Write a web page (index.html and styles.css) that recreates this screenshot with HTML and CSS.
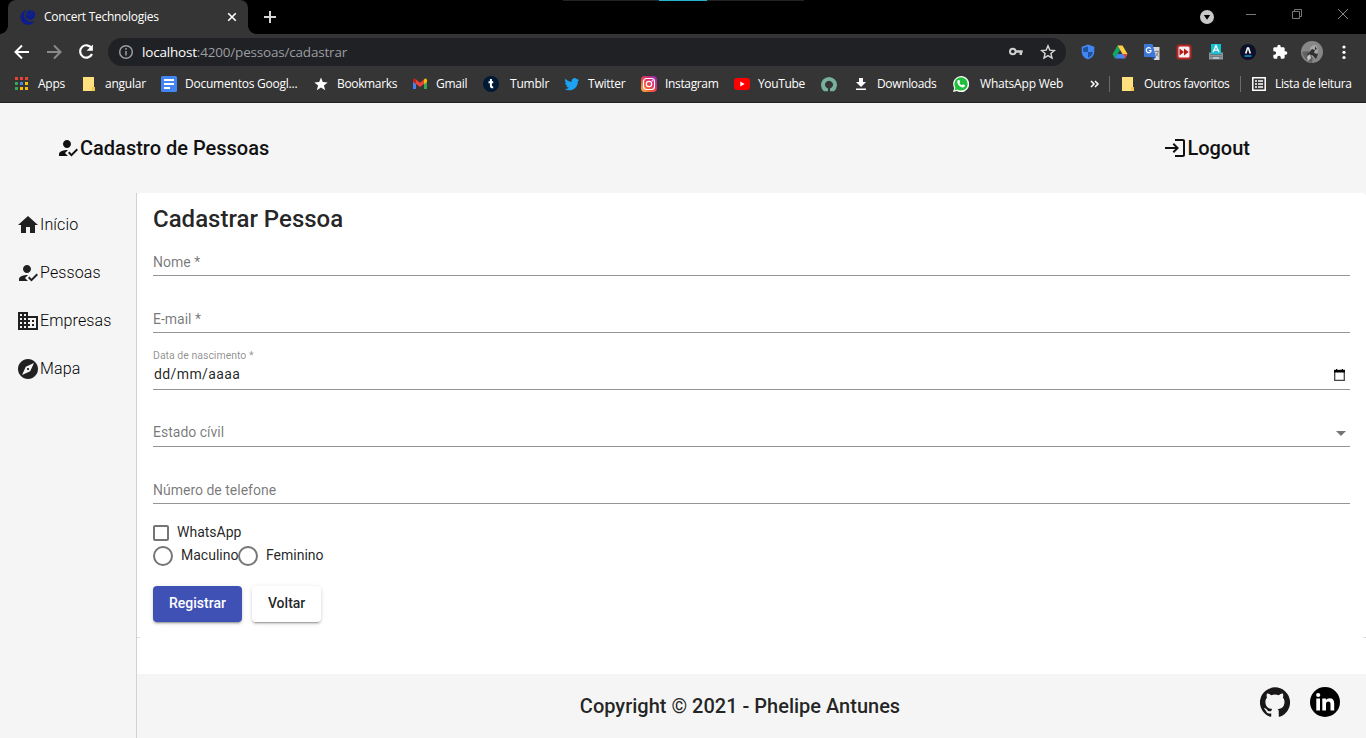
FILE: index.html
```
<!DOCTYPE html>
<html lang="pt-BR">
<head>
<meta charset="utf-8">
<title>Concert Technologies</title>
<link rel="stylesheet" href="styles.css">
</head>
<body>
<div class="browser">
  <div class="tabstrip">
    <div class="loadbar"><span class="loadbar-fill"></span></div>
    <div class="tab">
      <svg class="favicon" width="16" height="16" viewBox="0 0 16 16"><path d="M6.500 1A7.500 7.500 0 1 0 14.500 12C11 13.500 7 12.500 5 9.500C3.500 7 4 3.500 6.500 1Z" fill="#0d1d8c"/><path d="M6.500 3.500C9-.2 14.500 .8 15.300 5C15.800 9 11.500 12 8 10.300C5.500 9 5 6 6.500 3.500Z" fill="#0d1d8c"/><path d="M6.300 4.500L8.500 6.500 12.500 3" fill="none" stroke="#353535" stroke-width=".6"/></svg>
      <span class="tab-title">Concert Technologies</span>
      <svg class="tab-close" width="10" height="10" viewBox="0 0 10 10"><path d="M1.200 1.200l7.600 7.600M8.800 1.200L1.200 8.800" stroke="#fff" stroke-width="1.600"/></svg>
    </div>
    <svg class="newtab" width="12" height="12" viewBox="0 0 12 12"><path d="M6 0v12M0 6h12" stroke="#d5d5d5" stroke-width="2"/></svg>
    <div class="window-buttons">
      <svg width="14" height="14" viewBox="0 0 14 14"><circle cx="7" cy="7" r="7" fill="#c8c8c8"/><path d="M3.800 5h6.400L7 9.800z" fill="#000"/></svg>
      <svg width="10" height="10" viewBox="0 0 10 10"><path d="M0 5.500h10" stroke="#777"/></svg>
      <svg width="10" height="10" viewBox="0 0 10 10" fill="none" stroke="#777"><path d="M.5 2.500h7v7h-7zM2.500 2.500v-2h7v7h-2"/></svg>
      <svg width="10" height="10" viewBox="0 0 10 10"><path d="M0 0l10 10M10 0L0 10" stroke="#888"/></svg>
    </div>
  </div>
  <div class="toolbar">
    <svg width="24" height="24" viewBox="0 0 24 24" fill="none" stroke="#fff" stroke-width="2"><path d="M19 12H6M12 5.500L5.500 12l6.500 6.500"/></svg>
    <svg width="24" height="24" viewBox="0 0 24 24" fill="none" stroke="#8a8a8a" stroke-width="2"><path d="M5 12h13M12 5.500l6.500 6.500-6.500 6.500"/></svg>
    <svg width="24" height="24" viewBox="0 0 24 24" fill="none" stroke="#fff" stroke-width="2.200"><path d="M17.500 8A6.200 6.200 0 1 0 18 14"/><path d="M18.900 4.500v6.300h-6.300z" fill="#fff" stroke="none"/></svg>
    <div class="omnibox">
      <svg width="16" height="16" viewBox="0 0 16 16" fill="none" stroke="#9a9da1" stroke-width="1.500"><circle cx="8" cy="8" r="6.300"/><path d="M8 7v4.500M8 4v1.700"/></svg>
      <span class="url"><b>localhost</b>:4200/pessoas/cadastrar</span>
      <svg width="16" height="16" viewBox="0 0 16 16" fill="none" stroke="#d0d0d0"><circle cx="4.800" cy="7.500" r="2.800" stroke-width="2"/><path d="M7.500 7.500h7.200M12.800 7.500v3.500" stroke-width="2.400"/></svg>
      <svg width="16" height="16" viewBox="0 0 16 16" fill="none" stroke="#d8d8d8" stroke-width="1.400"><path d="M8 1.800l1.800 4.300 4.600.4-3.500 3 1.100 4.500L8 11.600 4 14l1.100-4.500-3.500-3 4.600-.4z"/></svg>
    </div>
    <div class="extensions">
      <svg width="16" height="16" viewBox="0 0 16 16"><path d="M8 .5l6.300 2.300v5c0 3.700-2.600 6.300-6.300 7.700C4.300 14.100 1.700 11.500 1.700 7.800v-5z" fill="#4285f4"/><path d="M8 2.500V8H3.200V3.900zM8 8h4.800c-.2 2.900-2.200 4.700-4.800 5.700z" fill="#21529c"/></svg>
      <svg width="16" height="16" viewBox="0 0 16 16"><path d="M5.500 1.500L.5 10.300 3 14.500 8 6z" fill="#11a861"/><path d="M5.500 1.500h5L15.500 10h-5z" fill="#ffcf48"/><path d="M5.600 10H15.500L13 14.500H3z" fill="#4285f4"/><path d="M11 10h4.500L13 14.500z" fill="#ea4335"/></svg>
      <svg width="16" height="16" viewBox="0 0 16 16"><path d="M6 3h9.500v13H10z" fill="#d8d8d8"/><path d="M0 0h8.500l3.500 13H1q-1 0-1-1z" fill="#3c78d8"/><path d="M7 13h5l-3 3z" fill="#254f9e"/><path d="M6.800 4.700A2.500 2.500 0 1 0 7 7.300V6.500H4.800" fill="none" stroke="#fff" stroke-width="1.200"/><path d="M10.800 7.500H15M13 6.500v1M14.200 8q-.5 3-2.500 4M11.600 9l3 3.500" stroke="#777" stroke-width=".8" fill="none"/></svg>
      <svg width="16" height="16" viewBox="0 0 16 16"><rect x=".5" y=".5" width="15" height="15" rx="3" fill="#b92525"/><rect x="2.500" y="2.500" width="11" height="11" rx="1.500" fill="#f7efef"/><path d="M3.500 4.500L8 8l-4.500 3.500zM8 4.500L12.700 8 8 11.500z" fill="#b71919"/></svg>
      <svg width="16" height="16" viewBox="0 0 16 16"><rect x="1" y="8.500" width="14" height="7" fill="#8a9498"/><path d="M2.500 10.500h11M2.500 12.500h11" stroke="#555f64" stroke-dasharray="1 1"/><path d="M3 0h10v10H3z" fill="#16bfd2"/><path d="M5 8.300L8 1.500l3 6.800M6.200 6.200h3.600" fill="none" stroke="#fff" stroke-width="1.300"/><path d="M5 14h6" stroke="#eee"/></svg>
      <svg width="16" height="16" viewBox="0 0 16 16"><circle cx="8" cy="8" r="8" fill="#0c1029"/><path d="M5.700 9.500L7.500 4h1l1.800 5.500" fill="none" stroke="#fff" stroke-width="1.600"/><path d="M4.500 12h7" stroke="#168fd1" stroke-width="1.500"/></svg>
      <svg width="16" height="16" viewBox="0 0 24 24"><path d="M20.500 11H19V7c0-1.100-.9-2-2-2h-4V3.500a2.500 2.500 0 0 0-5 0V5H4c-1.100 0-2 .9-2 2v3.800h1.500a2.700 2.700 0 0 1 0 5.400H2V20c0 1.100.9 2 2 2h3.800v-1.500a2.700 2.700 0 0 1 5.400 0V22H17c1.100 0 2-.9 2-2v-4h1.500a2.500 2.500 0 0 0 0-5z" fill="#fff"/></svg>
    </div>
    <svg class="avatar" width="22" height="22" viewBox="0 0 22 22"><circle cx="11" cy="11" r="11" fill="#878787"/><path d="M1 11q2 8 10 11l1-7-5-5z" fill="#606060"/><path d="M9 7q4-5 7-2l1 5-3 7-3-1z" fill="#a8a8a8"/><path d="M6 14l5-6 3 1-1 3 4 1-2 5-4-4zM14 5l2 3-2 1" fill="#303030"/><path d="M6 16l3-3 1 4-3 3z" fill="#c6c6c6"/></svg>
    <svg class="menu-dots" width="4" height="16" viewBox="0 0 4 16" fill="#fff"><circle cx="2" cy="3" r="1.600"/><circle cx="2" cy="8.300" r="1.600"/><circle cx="2" cy="13.500" r="1.600"/></svg>
  </div>
  <div class="bookmarks">
    <span class="bm"><svg width="16" height="16" viewBox="0 0 16 16"><path d="M1 1h3v3H1zM6 1h3v3H6zM11 1h3v3h-3z" fill="#ea4335"/><path d="M1 6h3v3H1zM1 11h3v3H1z" fill="#34a853"/><path d="M6 6h3v3H6z" fill="#4285f4"/><path d="M11 6h3v3h-3zM6 11h3v3H6zM11 11h3v3h-3z" fill="#fbbc05"/></svg>Apps</span>
    <span class="bm"><svg width="16" height="16" viewBox="0 0 16 16"><path d="M2 1h11v10h1v4H2z" fill="#ffe07f"/><path d="M11 11h3v4h-3z" fill="#f2c94c"/></svg>angular</span>
    <span class="bm"><svg width="16" height="16" viewBox="0 0 16 16"><rect width="16" height="16" rx="1.500" fill="#4285f4"/><path d="M3 4h10M3 8h10M3 12h6" stroke="#fff" stroke-width="2"/></svg>Documentos Googl...</span>
    <span class="bm snug"><svg width="16" height="16" viewBox="0 0 16 16"><path d="M8 1.500l1.800 4.600 4.900.3-3.800 3.100 1.300 4.800L8 11.600l-4.200 2.700 1.300-4.800-3.800-3.100 4.900-.3z" fill="#fff"/></svg>Bookmarks</span>
    <span class="bm"><svg width="16" height="16" viewBox="0 0 16 16"><path d="M1 4v9h3V7z" fill="#4285f4"/><path d="M12 7v6h3V4z" fill="#34a853"/><path d="M4 3.500l4 3.300 4-3.300V8l-4 3-4-3z" fill="#ea4335"/><path d="M1 4q1-2.500 3-.5V8L1 6z" fill="#c5221f"/><path d="M15 4q-1-2.500-3-.5V8l3-2z" fill="#fbbc04"/></svg>Gmail</span>
    <span class="bm wide"><svg width="16" height="16" viewBox="0 0 16 16"><circle cx="8" cy="8" r="8" fill="#001935"/><path d="M7.900 3v7q0 1.500 2.300 1.300M5.500 6.200h4.700" fill="none" stroke="#fff" stroke-width="2"/></svg>Tumblr</span>
    <span class="bm"><svg width="16" height="16" viewBox="-1 0 26 24"><path d="M23.600 4.900c-.9.400-1.800.7-2.800.8 1-.6 1.800-1.600 2.200-2.700-1 .6-2 1-3.100 1.200a4.900 4.900 0 0 0-8.400 4.500C7.500 8.500 3.900 6.600 1.400 3.600a4.900 4.900 0 0 0 1.500 6.600c-.8 0-1.600-.2-2.200-.6v.1c0 2.400 1.700 4.400 3.900 4.800-.7.200-1.500.2-2.200.1.600 2 2.400 3.400 4.600 3.400A9.900 9.900 0 0 1 0 20a13.900 13.900 0 0 0 7.500 2.200c9.100 0 14-7.500 14-14v-.6c.8-.7 1.500-1.600 2.100-2.700z" fill="#1da1f2"/></svg>Twitter</span>
    <span class="bm snug"><svg width="16" height="16" viewBox="0 0 16 16"><defs><linearGradient id="ig" x1="0" y1="1" x2="1" y2="0"><stop stop-color="#fdc447"/><stop offset=".35" stop-color="#f0583a"/><stop offset=".65" stop-color="#d62976"/><stop offset="1" stop-color="#8134c0"/></linearGradient></defs><rect width="16" height="16" rx="4" fill="url(#ig)"/><g fill="none" stroke="#fff" stroke-width="1.200"><rect x="2.500" y="2.500" width="11" height="11" rx="3"/><circle cx="8" cy="8" r="2.700"/></g><circle cx="11.300" cy="4.700" r=".7" fill="#fff"/></svg>Instagram</span>
    <span class="bm snug"><svg width="16" height="16" viewBox="0 0 16 16"><rect y="2" width="16" height="12" rx="3" fill="#f00"/><path d="M6.300 5.500v5l4.300-2.500z" fill="#fff"/></svg>YouTube</span>
    <span class="bm"><svg width="16" height="16" viewBox="0 0 16 16"><path d="M3 15.200H7V12.600A4 4 0 1 1 9 12.600V15.200H13A8 8 0 1 0 3 15.200Z" fill="#78b09f"/></svg></span>
    <span class="bm snug"><svg width="16" height="16" viewBox="0 0 16 16"><path d="M6 2h4v4h3l-5 5-5-5h3zM3 12.500h10V14H3z" fill="#fff"/></svg>Downloads</span>
    <span class="bm wide"><svg width="16" height="16" viewBox="0 0 16 16"><path d="M0 16l1.200-4A8 8 0 1 1 4 14.900z" fill="#fff"/><circle cx="8" cy="7.900" r="6.700" fill="#20bf3d"/><path d="M1.500 14.500l1-3 2 2z" fill="#20bf3d"/><path d="M5 4h1.400l.8 2-.8 1q1 1.700 2.600 2.300l1-1.100 2 1q-.3 2.500-2.600 2.200Q5.500 10.500 4.300 6.600 4 5 5 4z" fill="#fff"/></svg>WhatsApp Web</span>
    <span class="bm"><svg width="16" height="16" viewBox="0 0 16 16"><path d="M3 5l3 3-3 3M7 5l3 3-3 3" fill="none" stroke="#fff" stroke-width="1.500"/></svg></span>
    <span class="bm divider snug"><svg width="16" height="16" viewBox="0 0 16 16"><path d="M2 1h11v10h1v4H2z" fill="#ffe07f"/><path d="M11 11h3v4h-3z" fill="#f2c94c"/></svg>Outros favoritos</span>
    <span class="bm divider snug"><svg width="16" height="16" viewBox="0 0 16 16"><path d="M1.800 1.800h12.400v12.400H1.800z" fill="none" stroke="#fff" stroke-width="1.500"/><path d="M4 5h2M7 5h5M4 8h2M7 8h5M4 11h2M7 11h5" stroke="#fff" stroke-width="1.500"/></svg>Lista de leitura</span>
  </div>
</div>

<header class="app-header">
  <div class="brand"><svg width="24" height="24" viewBox="0 0 24 24"><path d="M9 17l3-2.940c-.39-.04-.68-.06-1-.06-2.670 0-8 1.340-8 4v2h9zM11 12c2.210 0 4-1.790 4-4s-1.790-4-4-4-4 1.790-4 4 1.790 4 4 4M15.470 20.500L12 17l1.400-1.410 2.070 2.080 5.130-5.170 1.400 1.410z"/></svg>Cadastro de Pessoas</div>
  <div class="logout"><svg width="24" height="24" viewBox="0 0 24 24"><path d="M11 7L9.600 8.400l2.600 2.600H2v2h10.200l-2.600 2.600L11 17l5-5zM20 19h-8v2h8c1.100 0 2-.9 2-2V5c0-1.100-.9-2-2-2h-8v2h8z"/></svg>Logout</div>
</header>

<div class="app-body">
  <nav class="sidebar">
    <a class="nav-item"><svg width="24" height="24" viewBox="0 0 24 24"><path d="M10 20v-6h4v6h5v-8h3L12 3 2 12h3v8z"/></svg><span>Início</span></a>
    <a class="nav-item"><svg width="24" height="24" viewBox="0 0 24 24"><path d="M9 17l3-2.940c-.39-.04-.68-.06-1-.06-2.670 0-8 1.340-8 4v2h9zM11 12c2.210 0 4-1.790 4-4s-1.790-4-4-4-4 1.790-4 4 1.790 4 4 4M15.470 20.500L12 17l1.400-1.410 2.070 2.080 5.130-5.170 1.400 1.410z"/></svg><span>Pessoas</span></a>
    <a class="nav-item"><svg width="24" height="24" viewBox="0 0 24 24"><path d="M12 7V3H2v18h20V7H12zM6 19H4v-2h2v2zm0-4H4v-2h2v2zm0-4H4V9h2v2zm0-4H4V5h2v2zm4 12H8v-2h2v2zm0-4H8v-2h2v2zm0-4H8V9h2v2zm0-4H8V5h2v2zm10 12h-8v-2h2v-2h-2v-2h2v-2h-2V9h8v10zm-2-8h-2v2h2v-2zm0 4h-2v2h2v-2z"/></svg><span>Empresas</span></a>
    <a class="nav-item"><svg width="24" height="24" viewBox="0 0 24 24"><path d="M12 10.900c-.61 0-1.100.49-1.100 1.100s.49 1.100 1.100 1.100c.61 0 1.100-.49 1.100-1.100s-.49-1.100-1.100-1.100zM12 2C6.480 2 2 6.480 2 12s4.480 10 10 10 10-4.480 10-10S17.520 2 12 2zm2.190 12.190L6 18l3.810-8.190L18 6l-3.810 8.190z"/></svg><span>Mapa</span></a>
  </nav>
  <div class="content">
    <main class="card">
      <h1 class="card-title">Cadastrar Pessoa</h1>
      <div class="field first"><span class="label">Nome *</span></div>
      <div class="field"><span class="label">E-mail *</span></div>
      <div class="field date">
        <div class="stack"><span class="float-label">Data de nascimento *</span><span class="value">dd/mm/aaaa</span></div>
        <svg class="calendar" width="11" height="12" viewBox="0 0 11 12"><path d="M.7 1.500h9.600v9.800H.7z" fill="none" stroke="#444" stroke-width="1.300"/><path d="M0 1h11v2.500H0zM2 0h1.200v1H2zM7.800 0H9v1H7.800z"/></svg>
      </div>
      <div class="field"><span class="label raised">Estado cívil</span><svg class="caret" width="10" height="5" viewBox="0 0 10 5"><path d="M0 0h10L5 5z" fill="#757575"/></svg></div>
      <div class="field"><span class="label">Número de telefone</span></div>
      <div class="check-row"><span class="checkbox"></span><span class="option-text">WhatsApp</span></div>
      <div class="radio-row"><span class="option first-option"><span class="radio"></span><span class="option-text">Maculino</span></span><span class="option"><span class="radio"></span><span class="option-text">Feminino</span></span></div>
      <div class="actions"><button class="btn primary">Registrar</button><button class="btn">Voltar</button></div>
    </main>
    <footer class="footer">
      <div class="copyright">Copyright © 2021 - Phelipe Antunes</div>
      <div class="social">
        <svg width="30" height="30" viewBox="0 0 24 24"><path fill="#191717" d="M12 .3a12 12 0 0 0-3.800 23.400c.6.100.8-.3.800-.6v-2c-3.300.7-4-1.600-4-1.600-.6-1.400-1.400-1.800-1.400-1.800-1-.7.1-.7.1-.7 1.200 0 1.900 1.200 1.900 1.200 1 1.800 2.800 1.300 3.500 1 0-.8.400-1.300.7-1.600-2.700-.3-5.500-1.300-5.500-6 0-1.200.5-2.300 1.300-3.100-.2-.4-.6-1.600 0-3.200 0 0 1-.3 3.400 1.200a11.500 11.500 0 0 1 6 0c2.300-1.500 3.300-1.200 3.300-1.200.6 1.600.2 2.800 0 3.200.9.800 1.300 1.900 1.300 3.200 0 4.600-2.800 5.600-5.500 5.900.5.400.9 1 .9 2.200v3.300c0 .3.100.7.800.6A12 12 0 0 0 12 .3"/></svg>
        <svg width="30" height="30" viewBox="0 0 30 30"><circle cx="15" cy="15" r="15"/><path fill="#fff" d="M6.300 11.500h3.700v12H6.300zM12.300 11.500h3.600v1.600q1.200-1.900 3.700-1.900 4.600 0 4.600 5.300v7h-3.700v-6.300q0-2.800-2.200-2.800-2.300 0-2.300 2.800v6.300h-3.700z"/><circle cx="8.200" cy="8" r="2.100" fill="#fff"/></svg>
      </div>
    </footer>
  </div>
</div>
</body>
</html>
```
FILE: styles.css
```
* { box-sizing: border-box; }
body { margin: 0; width: 1366px; height: 738px; overflow: hidden; background: #fff; font-family: Roboto, sans-serif; color: rgba(0, 0, 0, .87); }
svg { display: block; flex: none; }

/* browser window */
.browser { height: 103px; background: #353535; border-bottom: 1px solid #202124; font: 12px/16px "Open Sans", sans-serif; color: #fff; }
.tabstrip { position: relative; height: 34px; background: #000; display: flex; align-items: center; padding-left: 8px; }
.loadbar { position: absolute; top: 0; left: 563px; width: 241px; height: 1px; background: #222; }
.loadbar-fill { display: block; width: 48px; height: 1px; margin-left: 96px; background: #22b4cf; }
.tab { position: relative; width: 240px; height: 34px; background: #353535; border-radius: 8px 8px 0 0; display: flex; align-items: center; padding: 0 11px 0 12px; }
.tab::before, .tab::after { content: ""; position: absolute; bottom: 0; width: 8px; height: 8px; }
.tab::before { left: -8px; background: radial-gradient(circle at 0 0, #000 7.5px, #353535 8px); }
.tab::after { right: -8px; background: radial-gradient(circle at 100% 0, #000 7.5px, #353535 8px); }
.tab-title { margin-left: 8px; flex: 1; letter-spacing: -.28px; white-space: nowrap; }
.newtab { margin-left: 16px; }
.window-buttons { margin-left: auto; display: flex; align-items: center; gap: 36px; padding: 0 18px 6px 0; }
.window-buttons svg:first-child { margin: 6px -4px 0 0; }
.toolbar { height: 36px; display: flex; align-items: center; padding-left: 10px; }
.toolbar > svg + svg { margin-left: 8px; }
.omnibox { margin-left: 10px; width: 958px; height: 28px; border-radius: 14px; background: #202124; display: flex; align-items: center; padding: 0 10px; }
.url { flex: 1; margin-left: 8px; font-size: 13.5px; line-height: 20px; letter-spacing: -.19px; color: #9a9da1; }
.url b { font-weight: 400; color: #fff; }
.omnibox svg:last-child { margin-left: 16px; }
.extensions { display: flex; gap: 16px; margin-left: 14px; }
.avatar { margin-left: 13px; }
.toolbar > svg.menu-dots { margin-left: 19px; }
.bookmarks { height: 28px; display: grid; align-items: center; padding-left: 14px; grid-template-columns: 67px 80px 152px 99px 71px 81px 77px 93px 87px 32px 100px 135px 21px 131px 126px; }
.bm { display: flex; align-items: center; gap: 8px; white-space: nowrap; letter-spacing: -.23px; }
.bm.wide { gap: 11px; letter-spacing: -.2px; }
.bm.snug { letter-spacing: -.35px; }
.bm.divider { height: 16px; border-left: 1px solid #6b6b6b; padding-left: 10px; }

/* application */
.app-header { height: 90px; background: #f5f5f5; display: flex; justify-content: space-between; align-items: center; padding: 0 116px 0 56px; font-size: 20px; font-weight: 500; line-height: 24px; }
.brand, .logout, .nav-item { display: flex; align-items: center; }
.brand, .logout { color: #111; fill: #111; }
.app-body { display: flex; height: 545px; }
.sidebar { width: 137px; background: #f5f5f5; border-right: 1px solid #d2d2d2; padding: 8px 0 0 16px; }
.nav-item { height: 48px; font-size: 16px; font-weight: 300; letter-spacing: .13px; color: #000; }
.nav-item span { padding-bottom: 2px; }
.nav-item svg { fill: #212121; }
.content { flex: 1; display: flex; flex-direction: column; background: linear-gradient(#f5f5f5 10px, #fff 10px); }
.card { position: relative; height: 445px; padding: 0 16px 16px; background: #fff; border-radius: 4px; }
/* card shadow shows only at the two lower corners */
.card::after { content: ""; position: absolute; left: 0; right: 0; bottom: 0; height: 1px; background: linear-gradient(90deg, #c8c8c8, #fff 4px, #fff calc(100% - 4px), #c8c8c8); }
.card-title { height: 51px; margin: 0; font-size: 24px; font-weight: 500; line-height: 53px; }
.field { height: 57px; border-bottom: 1px solid #949494; display: flex; align-items: flex-end; justify-content: space-between; font-size: 14px; font-weight: 400; line-height: 18px; }
.field.first { height: 32px; }
.label { color: rgba(0, 0, 0, .54); padding-bottom: 4px; }
.label.raised { padding-bottom: 5px; }
.stack { display: flex; flex-direction: column; padding-bottom: 6px; }
.float-label { font-size: 10.5px; line-height: 18px; color: rgba(0, 0, 0, .46); }
.value { padding-left: 1px; letter-spacing: .4px; }
.calendar { margin: 0 5px 8px 0; }
.caret { margin: 0 4px 10px 0; }
.check-row, .option { display: flex; align-items: center; gap: 8px; font-size: 14px; }
.option-text { padding-bottom: 2px; }
.check-row { height: 24px; margin-top: 17px; }
.checkbox { width: 16px; height: 16px; border: 2px solid #757575; border-radius: 2px; }
.radio-row { display: flex; height: 22px; }
.first-option { width: 85px; }
.radio { width: 20px; height: 20px; flex: none; border: 2px solid #757575; border-radius: 50%; }
.actions { display: flex; gap: 10px; margin-top: 19px; }
.btn { height: 36px; padding: 0 16px 2px; border: 0; border-radius: 4px; background: #fff; color: rgba(0, 0, 0, .87); font: 500 14px/34px Roboto, sans-serif; box-shadow: 0 3px 1px -2px rgba(0,0,0,.2), 0 2px 2px rgba(0,0,0,.14), 0 1px 5px rgba(0,0,0,.12); }
.btn.primary { background: #3f51b5; color: #fff; }
.footer { height: 64px; margin-top: 36px; background: #f5f5f5; display: grid; grid-template-columns: 1206px; align-items: center; }
.copyright { grid-area: 1 / 1; text-align: center; font-size: 20px; font-weight: 500; }
.social { grid-area: 1 / 1; justify-self: end; display: flex; gap: 20px; padding: 0 3px 8px 0; }
```
